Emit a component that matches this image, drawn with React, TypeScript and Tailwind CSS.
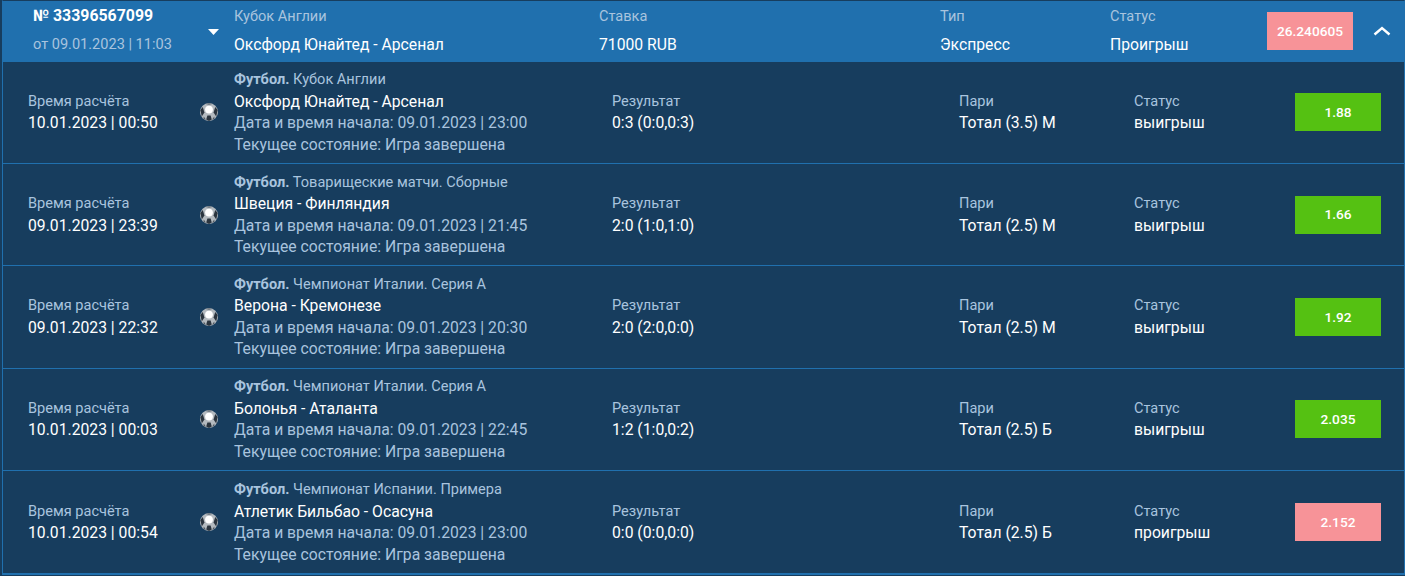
const rows = [
  { time: "10.01.2023 | 00:50", league: "Кубок Англии", match: "Оксфорд Юнайтед - Арсенал", start: "09.01.2023 | 23:00", result: "0:3 (0:0,0:3)", bet: "Тотал (3.5) М", status: "выигрыш", odd: "1.88", win: true },
  { time: "09.01.2023 | 23:39", league: "Товарищеские матчи. Сборные", match: "Швеция - Финляндия", start: "09.01.2023 | 21:45", result: "2:0 (1:0,1:0)", bet: "Тотал (2.5) М", status: "выигрыш", odd: "1.66", win: true },
  { time: "09.01.2023 | 22:32", league: "Чемпионат Италии. Серия А", match: "Верона - Кремонезе", start: "09.01.2023 | 20:30", result: "2:0 (2:0,0:0)", bet: "Тотал (2.5) М", status: "выигрыш", odd: "1.92", win: true },
  { time: "10.01.2023 | 00:03", league: "Чемпионат Италии. Серия А", match: "Болонья - Аталанта", start: "09.01.2023 | 22:45", result: "1:2 (1:0,0:2)", bet: "Тотал (2.5) Б", status: "выигрыш", odd: "2.035", win: true },
  { time: "10.01.2023 | 00:54", league: "Чемпионат Испании. Примера", match: "Атлетик Бильбао - Осасуна", start: "09.01.2023 | 23:00", result: "0:0 (0:0,0:0)", bet: "Тотал (2.5) Б", status: "проигрыш", odd: "2.152", win: false },
];

function Ball() {
  return (
    <svg width="20" height="20" viewBox="0 0 20 20" className="block blur-[0.5px]">
      <circle cx="10" cy="10" r="9" fill="#b4babf" />
      <circle cx="10" cy="7.6" r="3.9" fill="#ffffff" />
      <path d="M1.3 8 L3.8 5 L5.4 10.5 L2.8 14.4 Z" fill="#2a343e" />
      <path d="M18.7 8 L16.2 5 L14.6 10.5 L17.2 14.4 Z" fill="#2a343e" />
      <path d="M6.5 1.9 L10 1 L13.5 1.9 L10 3 Z" fill="#707a82" />
      <path d="M8.4 13.6 L11.6 13.6 L12.8 17.4 L10 19 L7.2 17.4 Z" fill="#2a343e" />
      <path d="M4.8 14.6 L7 17.8 L4.4 16.8 Z M15.2 14.6 L13 17.8 L15.6 16.8 Z" fill="#4f5860" />
    </svg>
  );
}

function Field({ label, value, className }: { label: string; value: string; className: string }) {
  return (
    <div className={className}>
      <div className="text-[14.55px] leading-[21.5px] text-[#a9c4de]">{label}</div>
      <div className="text-[15.72px] leading-[21.5px] text-white">{value}</div>
    </div>
  );
}

export default function App() {
  return (
    <div className="h-[576px] w-[1405px] overflow-hidden bg-[#173d5e] pl-[2px] font-['Roboto',sans-serif]">
      <div className="h-[574.7px] border-x border-b-2 border-t border-x-[#2070ae] border-b-[#2070ae] border-t-[#173d5e]">
        <div className="flex h-[60.7px] items-start bg-[#2070ae] pt-[2px]">
          <div className="-mt-[1px] w-[205px] shrink-0 pl-[30px]">
            <div className="text-[15.87px] font-bold leading-[28px] text-white">№ 33396567099</div>
            <div className="mt-[1px] text-[14.55px] leading-[28px] text-[#a9c4de]">от 09.01.2023 | 11:03</div>
          </div>
          <svg width="11" height="6" viewBox="0 0 11 6" className="mr-[15px] mt-[26px] shrink-0"><path d="M0 0H11L5.5 6Z" fill="#fff" /></svg>
          <div className="w-[365px] shrink-0">
            <div className="text-[14.55px] leading-[28px] text-[#a9c4de]">Кубок Англии</div>
            <div className="text-[15.72px] leading-[28px] text-white">Оксфорд Юнайтед - Арсенал</div>
          </div>
          <div className="w-[341px] shrink-0">
            <div className="text-[14.55px] leading-[28px] text-[#a9c4de]">Ставка</div>
            <div className="text-[15.72px] leading-[28px] text-white">71000 RUB</div>
          </div>
          <div className="w-[170px] shrink-0">
            <div className="text-[14.55px] leading-[28px] text-[#a9c4de]">Тип</div>
            <div className="text-[15.72px] leading-[28px] text-white">Экспресс</div>
          </div>
          <div className="w-[157px] shrink-0">
            <div className="text-[14.55px] leading-[28px] text-[#a9c4de]">Статус</div>
            <div className="text-[15.72px] leading-[28px] text-white">Проигрыш</div>
          </div>
          <div className="mt-[9px] flex h-[38px] w-[86px] shrink-0 items-center justify-center bg-[#f79398] text-[13.7px] font-medium text-white">26.240605</div>
          <svg width="18" height="10" viewBox="0 0 18 10" className="ml-[20px] mt-[23px] shrink-0"><path d="M1.5 8.5L9 2L16.5 8.5" fill="none" stroke="#fff" strokeWidth="2.4" /></svg>
        </div>
        {rows.map((r, i) => (
          <div key={i} className={`flex h-[102.4px] items-center pb-[0.4px] ${i < 4 ? "border-b border-[#2070ae]" : ""}`}>
            <Field label="Время расчёта" value={r.time} className="w-[194px] shrink-0 pl-[25px]" />
            <div className="w-[37px] shrink-0 pl-[2px]"><Ball /></div>
            <div className="w-[378px] shrink-0">
              <div className="text-[14.55px] leading-[21.5px] text-[#a9c4de]"><b>Футбол.</b> {r.league}</div>
              <div className="text-[15.72px] leading-[21.5px] text-white">{r.match}</div>
              <div className="text-[15.72px] leading-[21.5px] text-[#a9c4de]">Дата и время начала: {r.start}</div>
              <div className="text-[15.72px] leading-[21.5px] text-[#a9c4de]">Текущее состояние: Игра завершена</div>
            </div>
            <Field label="Результат" value={r.result} className="w-[347px] shrink-0" />
            <Field label="Пари" value={r.bet} className="w-[175px] shrink-0" />
            <Field label="Статус" value={r.status} className="w-[161px] shrink-0" />
            <div className={`flex h-[38px] w-[86px] shrink-0 items-center justify-center text-[13.7px] font-medium text-white ${r.win ? "bg-[#55c112]" : "bg-[#f79398]"}`}>{r.odd}</div>
          </div>
        ))}
      </div>
    </div>
  );
}
